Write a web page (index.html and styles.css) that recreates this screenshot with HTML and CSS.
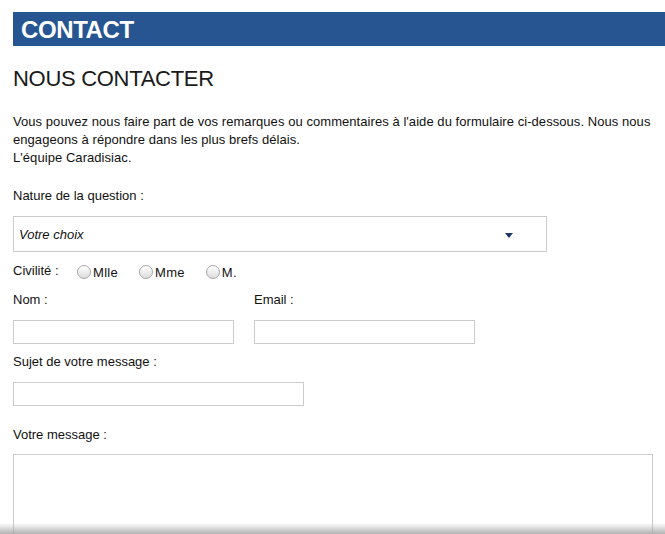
FILE: index.html
```html
<!DOCTYPE html>
<html lang="fr">
<head>
<meta charset="utf-8">
<title>Contact</title>
<link rel="stylesheet" href="styles.css">
</head>
<body>
<div class="page">
  <div class="banner">CONTACT</div>
  <h2 class="title">NOUS CONTACTER</h2>
  <p class="intro">Vous pouvez nous faire part de vos remarques ou commentaires à l'aide du formulaire ci-dessous. Nous nous engageons à répondre dans les plus brefs délais.<br>L'équipe Caradisiac.</p>

  <div class="label label-nature">Nature de la question :</div>
  <div class="select">
    <span class="select-text">Votre choix</span>
    <svg class="select-arrow" width="8" height="5" viewBox="0 0 8 5"><path d="M0 0H8L4 5Z" fill="#1b3866"/></svg>
  </div>

  <div class="civ-row">
    <span class="civ-label">Civilité :</span>
    <label class="opt"><input type="radio" name="civ" class="radio"><span>Mlle</span></label>
    <label class="opt"><input type="radio" name="civ" class="radio"><span>Mme</span></label>
    <label class="opt"><input type="radio" name="civ" class="radio"><span>M.</span></label>
  </div>

  <div class="two-col">
    <div class="col">
      <div class="label">Nom :</div>
      <input type="text" class="field field-half">
    </div>
    <div class="col">
      <div class="label">Email :</div>
      <input type="text" class="field field-half">
    </div>
  </div>

  <div class="label label-sujet">Sujet de votre message :</div>
  <input type="text" class="field field-sujet">

  <div class="label label-msg">Votre message :</div>
  <textarea class="message"></textarea>
</div>
<div class="bottom-shade"></div>
</body>
</html>
```

FILE: styles.css
```css
html, body {
  margin: 0;
  padding: 0;
  background: #fff;
  overflow: hidden;
}
body {
  font-family: "Liberation Sans", Arial, Helvetica, sans-serif;
  font-size: 13px;
  color: #111;
}
.page {
  padding: 12px 0 0 13px;
}
.banner {
  background: #275592;
  color: #fff;
  height: 34px;
  line-height: 35px;
  font-size: 24px;
  font-weight: bold;
  letter-spacing: -0.4px;
  padding-left: 8px;
}
.title {
  margin: 20px 0 0 0;
  font-size: 22px;
  line-height: 26px;
  font-weight: normal;
  letter-spacing: -0.3px;
  color: #1a1a1a;
}
.intro {
  margin: 21px 0 0 0;
  width: 645px;
  line-height: 18px;
  letter-spacing: 0.06px;
}
.label {
  line-height: 18px;
}
.label-nature {
  margin-top: 20px;
}
.select {
  box-sizing: border-box;
  margin-top: 11px;
  width: 534px;
  height: 36px;
  border: 1px solid #cbcbcb;
  display: flex;
  align-items: center;
  justify-content: space-between;
  padding: 0 33px 0 5px;
}
.select-text {
  font-style: italic;
}
.select-arrow {
  margin-top: 3px;
}
.civ-row {
  margin-top: 10px;
  height: 18px;
  display: flex;
  align-items: center;
}
.civ-label {
  width: 46px;
  margin-right: 18px;
  margin-top: -2px;
}
.opt {
  display: flex;
  align-items: center;
  margin-right: 21px;
  margin-top: 2px;
  letter-spacing: 0.3px;
}
.radio {
  appearance: none;
  -webkit-appearance: none;
  box-sizing: border-box;
  width: 14px;
  height: 14px;
  margin: 0 2px 0 0;
  border: 1px solid #a7a7a7;
  border-radius: 50%;
  background: linear-gradient(#ffffff, #dcdcdc);
}
.two-col {
  margin-top: 11px;
  display: flex;
  gap: 20px;
}
.field {
  box-sizing: border-box;
  display: block;
  height: 24px;
  border: 1px solid #cbcbcb;
  margin: 11px 0 0 0;
  padding: 0;
  background: #fff;
}
.field-half {
  width: 221px;
}
.label-sujet {
  margin-top: 9px;
}
.field-sujet {
  width: 291px;
}
.label-msg {
  margin-top: 20px;
}
.message {
  box-sizing: border-box;
  display: block;
  margin-top: 10px;
  width: 640px;
  height: 120px;
  border: 1px solid #cbcbcb;
  resize: none;
}
.bottom-shade {
  position: fixed;
  left: 0;
  right: 0;
  bottom: 0;
  height: 11px;
  background: linear-gradient(rgba(200,200,200,0), rgba(170,170,170,0.9));
}
```
